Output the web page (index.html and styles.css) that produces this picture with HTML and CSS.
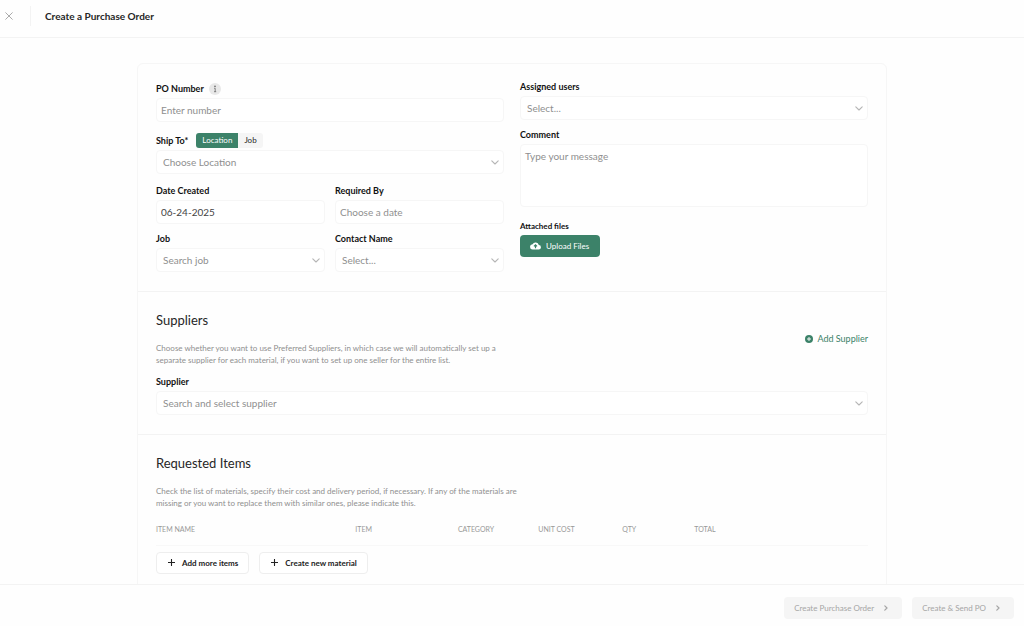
FILE: index.html
```html
<!DOCTYPE html>
<html lang="en">
<head>
<meta charset="utf-8">
<meta name="viewport" content="width=device-width, initial-scale=1">
<title>Create a Purchase Order</title>
<link rel="stylesheet" href="styles.css">
</head>
<body>
<svg class="sprite" aria-hidden="true">
  <symbol id="chevron-down" viewBox="0 0 8 5"><path d="M.8.8 4 4 7.200.8" fill="none" stroke="currentColor" stroke-width="1.100" stroke-linecap="round" stroke-linejoin="round"/></symbol>
  <symbol id="chevron-right" viewBox="0 0 4 6"><path d="M.8.8 3 3 .8 5.200" fill="none" stroke="currentColor" stroke-width="1.200" stroke-linecap="round" stroke-linejoin="round"/></symbol>
  <symbol id="plus" viewBox="0 0 7 7"><path d="M3.500.4v6.200M.4 3.500h6.200" fill="none" stroke="currentColor" stroke-width="1.100" stroke-linecap="round"/></symbol>
</svg>

<header class="topbar">
  <button class="close" type="button" aria-label="Close">
    <svg viewBox="0 0 8 8" width="8" height="8"><path d="M.7.7l6.600 6.600M7.300.7.7 7.300" fill="none" stroke="currentColor" stroke-width="1" stroke-linecap="round"/></svg>
  </button>
  <h1 class="topbar-title">Create a Purchase Order</h1>
</header>

<main class="content">
  <form class="card" id="po-form">
    <section class="section details">
      <div class="column">
        <div class="field">
          <div class="label-row">
            <label class="label" for="po-number">PO Number</label>
            <button class="info" type="button" aria-label="About PO number">
              <svg viewBox="0 0 12 12" width="12" height="12"><circle cx="6" cy="6" r="6" fill="#e8e8e8"/><circle cx="6" cy="3.400" r=".8" fill="#666"/><path d="M5.200 5.300h1v3.400M5 8.700h2.200" fill="none" stroke="#666" stroke-width=".8"/></svg>
            </button>
          </div>
          <input class="control" id="po-number" type="text" placeholder="Enter number">
        </div>
        <div class="field">
          <div class="label-row">
            <label class="label" for="ship-to">Ship To*</label>
            <div class="toggle" role="group" aria-label="Ship to type">
              <button class="toggle-option is-active" type="button" aria-pressed="true">Location</button>
              <button class="toggle-option" type="button" aria-pressed="false">Job</button>
            </div>
          </div>
          <div class="select"><select class="control" id="ship-to"><option>Choose Location</option></select><svg class="chevron"><use href="#chevron-down"/></svg></div>
        </div>
        <div class="pair">
          <div class="field">
            <label class="label" for="created">Date Created</label>
            <input class="control" id="created" type="text" value="06-24-2025">
          </div>
          <div class="field">
            <label class="label" for="required">Required By</label>
            <input class="control" id="required" type="text" placeholder="Choose a date">
          </div>
          <div class="field">
            <label class="label" for="job">Job</label>
            <div class="select"><select class="control" id="job"><option>Search job</option></select><svg class="chevron"><use href="#chevron-down"/></svg></div>
          </div>
          <div class="field">
            <label class="label" for="contact">Contact Name</label>
            <div class="select"><select class="control" id="contact"><option>Select...</option></select><svg class="chevron"><use href="#chevron-down"/></svg></div>
          </div>
        </div>
      </div>

      <div class="column column-side">
        <div class="field">
          <label class="label" for="users">Assigned users</label>
          <div class="select"><select class="control" id="users"><option>Select...</option></select><svg class="chevron"><use href="#chevron-down"/></svg></div>
        </div>
        <div class="field">
          <label class="label" for="comment">Comment</label>
          <textarea class="control comment" id="comment" placeholder="Type your message"></textarea>
        </div>
        <div class="field files">
          <span class="label files-label" id="files-label">Attached files</span>
          <button class="button button-primary" type="button" aria-describedby="files-label">
            <svg viewBox="0 0 24 18" width="11" height="8"><path d="M19.400 7A7.500 7.500 0 0 0 5.400 5 6 6 0 0 0 6 17h13a5 5 0 0 0 .4-10z" fill="#fff"/><path d="M12 14V7M8.500 10 12 6.500l3.500 3.500" fill="none" stroke="#3c8269" stroke-width="2.600"/></svg>
            Upload Files
          </button>
        </div>
      </div>
    </section>

    <section class="section">
      <div class="section-head">
        <div class="intro">
          <h2 class="section-title">Suppliers</h2>
          <p class="section-text">Choose whether you want to use Preferred Suppliers, in which case we will automatically set up a separate supplier for each material, if you want to set up one seller for the entire list.</p>
        </div>
        <button class="add-supplier" type="button">
          <svg viewBox="0 0 8 8" width="8" height="8"><circle cx="4" cy="4" r="4" fill="#3c8269"/><path d="M4 2v4M2 4h4" stroke="#fff" stroke-width=".9"/></svg>
          Add Supplier
        </button>
      </div>
      <div class="field">
        <label class="label" for="supplier">Supplier</label>
        <div class="select"><select class="control" id="supplier"><option>Search and select supplier</option></select><svg class="chevron"><use href="#chevron-down"/></svg></div>
      </div>
    </section>

    <section class="section">
      <div class="section-head">
        <div class="intro">
          <h2 class="section-title">Requested Items</h2>
          <p class="section-text">Check the list of materials, specify their cost and delivery period, if necessary. If any of the materials are missing or you want to replace them with similar ones, please indicate this.</p>
        </div>
      </div>
      <table class="items">
        <colgroup><col class="col-name"><col class="col-item"><col class="col-category"><col class="col-cost"><col class="col-qty"><col></colgroup>
        <thead><tr><th scope="col">ITEM NAME</th><th scope="col">ITEM</th><th scope="col">CATEGORY</th><th scope="col">UNIT COST</th><th scope="col">QTY</th><th scope="col">TOTAL</th></tr></thead>
      </table>
      <div class="actions">
        <button class="button button-outline" type="button"><svg width="7" height="7"><use href="#plus"/></svg>Add more items</button>
        <button class="button button-outline" type="button"><svg width="7" height="7"><use href="#plus"/></svg>Create new material</button>
      </div>
    </section>
  </form>
</main>

<footer class="footer">
  <button class="button button-disabled" type="submit" form="po-form" disabled>Create Purchase Order<svg width="4" height="6"><use href="#chevron-right"/></svg></button>
  <button class="button button-disabled" type="submit" form="po-form" disabled>Create &amp; Send PO<svg width="4" height="6"><use href="#chevron-right"/></svg></button>
</footer>
</body>
</html>
```
FILE: styles.css
```css
:root {
  --green: #3c8269;
  --line: #f3f3f3;
  --line-soft: #f6f6f6;
  --muted: #8f8f8f;
  --ink: #262626;
}

* { box-sizing: border-box; }

body {
  margin: 0;
  height: 100vh;
  display: flex;
  flex-direction: column;
  background: #fefefe;
  color: var(--ink);
  font-family: Lato, "Liberation Sans", sans-serif;
  font-size: 10px;
  line-height: 14px;
}

button, input, select, textarea { font: inherit; color: inherit; }

button {
  margin: 0;
  padding: 0;
  border: 0;
  background: none;
}

h1, h2, p { margin: 0; }

svg { flex: none; }

.sprite { display: none; }

.topbar {
  display: flex;
  align-items: center;
  height: 38px;
  padding: 0 5px 5px;
  border-bottom: 1px solid var(--line);
}

.close {
  display: flex;
  align-items: center;
  height: 20px;
  padding-right: 17px;
  border-right: 1px solid var(--line);
  color: #aaa;
}

.topbar-title {
  padding-left: 14px;
  font-size: 10px;
  font-weight: 700;
}

.content {
  flex: 1;
  min-height: 0;
  padding: 25px 16px;
  overflow-y: auto;
  scrollbar-width: none;
}

.card {
  max-width: 750px;
  margin: 0 auto;
  border: 1px solid var(--line-soft);
  border-radius: 6px;
}

.section { padding: 20px 18px 19px; }
.section + .section { border-top: 1px solid var(--line); }

.details {
  display: grid;
  grid-template-columns: 1fr 1fr;
  gap: 16px;
  padding-top: 16px;
}

.column {
  display: flex;
  flex-direction: column;
  gap: 10px;
}

.column-side { gap: 8px; }

.pair {
  display: grid;
  grid-template-columns: 1fr 1fr;
  gap: 8px 10px;
}

.field {
  display: flex;
  flex-direction: column;
  gap: 2px;
  min-width: 0;
}

.label {
  color: #111;
  font-size: 9px;
  font-weight: 700;
  line-height: 14px;
}

.label-row {
  display: flex;
  align-items: flex-end;
  min-height: 16px;
  gap: 5px;
}

.info { display: flex; padding-bottom: 1px; }

.toggle {
  display: flex;
  margin-left: 3px;
  border-radius: 3px;
  background: #f5f5f5;
  overflow: hidden;
}

.toggle-option {
  height: 15px;
  padding: 0 6px;
  font-size: 8px;
  line-height: 15px;
}

.toggle-option.is-active {
  background: var(--green);
  color: #fff;
}

.control {
  width: 100%;
  min-width: 0;
  height: 24px;
  margin: 0;
  padding: 0 4px;
  border: 1px solid var(--line-soft);
  border-radius: 4px;
  background: #fff;
  color: #444;
  font-size: 10px;
}

.control::placeholder { color: var(--muted); opacity: 1; }

.comment {
  display: block;
  height: 63px;
  padding: 4px;
  resize: none;
}

.select {
  display: grid;
  align-items: center;
}

.select > * { grid-area: 1 / 1; }

.select .control {
  appearance: none;
  padding: 0 20px 0 6px;
  color: var(--muted);
}

.chevron {
  justify-self: end;
  width: 8px;
  height: 5px;
  margin-right: 5px;
  color: #b5b5b5;
  pointer-events: none;
}

.files {
  align-items: flex-start;
  padding-top: 4px;
}

.files-label { font-size: 8px; }

.button {
  display: flex;
  align-items: center;
  height: 22px;
  border-radius: 4px;
  font-size: 8px;
  white-space: nowrap;
}

.button-primary {
  gap: 5px;
  padding: 0 11px 0 10px;
  background: var(--green);
  color: #fff;
}

.button-outline {
  gap: 7px;
  padding: 0 10px 0 11px;
  border: 1px solid #eee;
  background: #fff;
  color: #222;
  font-weight: 700;
}

.button-disabled {
  gap: 10px;
  padding: 0 14px 0 10px;
  background: #f5f5f5;
  color: #a6a6a6;
}

.section-head {
  display: flex;
  align-items: center;
  justify-content: space-between;
  gap: 16px;
  margin-bottom: 9px;
}

.intro { max-width: 370px; }

.section-title {
  margin-bottom: 14px;
  font-size: 13px;
  font-weight: 400;
  line-height: 16px;
}

.section-text {
  color: var(--muted);
  font-size: 8px;
  line-height: 12px;
}

.add-supplier {
  display: flex;
  align-items: center;
  gap: 4px;
  color: var(--green);
  font-size: 9px;
}

.items {
  width: 100%;
  table-layout: fixed;
  border-collapse: collapse;
}

.items th {
  height: 27px;
  padding: 0 0 4px;
  border-bottom: 1px solid #f8f8f8;
  color: #999;
  font-size: 7px;
  font-weight: 400;
  line-height: 8px;
  text-align: left;
}

.col-name { width: 28%; }
.col-item { width: 14.4%; }
.col-category { width: 11.3%; }
.col-cost { width: 11.8%; }
.col-qty { width: 10.1%; }

.actions {
  display: flex;
  gap: 10px;
  padding-top: 6px;
}

.footer {
  display: flex;
  align-items: center;
  justify-content: flex-end;
  gap: 10px;
  height: 42px;
  padding: 4px 10px 0;
  border-top: 1px solid var(--line);
}
```
